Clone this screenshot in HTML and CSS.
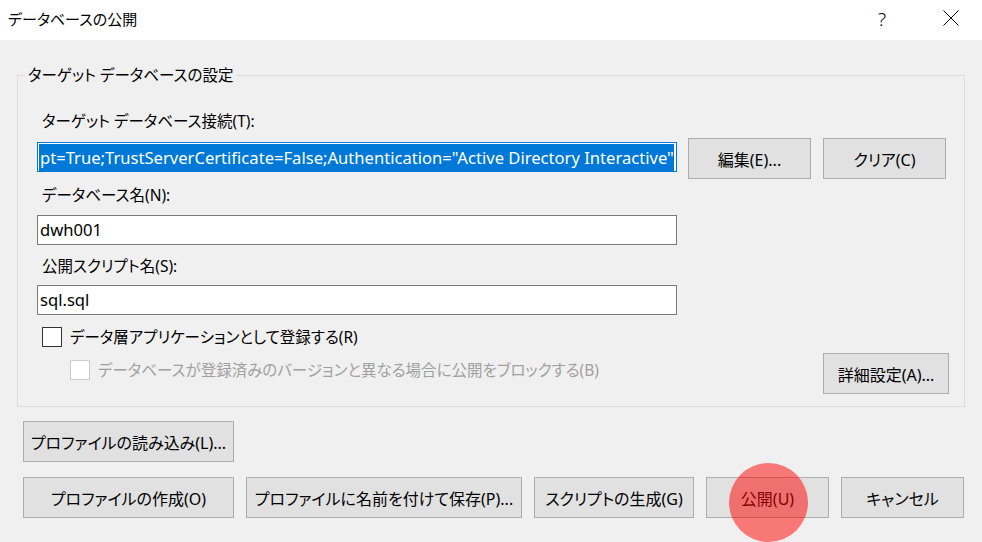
FILE: index.html
```html
<!DOCTYPE html>
<html lang="ja">
<head>
<meta charset="utf-8">
<title>データベースの公開</title>
<link rel="stylesheet" href="styles.css">
</head>
<body>
<div class="titlebar">
  <span class="title">データベースの公開</span>
  <span class="help">?</span>
  <span class="close">
    <svg width="16" height="16" viewBox="0 0 16 16"><path d="M0.5 0.5 L15.5 15.5 M15.5 0.5 L0.5 15.5" stroke="#000" stroke-width="1" fill="none"/></svg>
  </span>
</div>
<div class="dialog">
  <div class="group">
    <span class="legend">ターゲット データベースの設定</span>
    <div class="label l1">ターゲット データベース接続(T):</div>
    <div class="row conn">
      <div class="textbox active"><span class="sel">pt=True;TrustServerCertificate=False;Authentication="Active Directory Interactive"</span></div>
      <button class="btn w123 edit">編集(E)...</button>
      <button class="btn w123 clear">クリア(C)</button>
    </div>
    <div class="label l2">データベース名(N):</div>
    <div class="textbox tb2">dwh001</div>
    <div class="label l3">公開スクリプト名(S):</div>
    <div class="textbox tb3">sql.sql</div>
    <div class="check cb1"><span class="box"></span><span>データ層アプリケーションとして登録する(R)</span></div>
    <div class="row last">
      <div class="check cb2 disabled"><span class="box"></span><span>データベースが登録済みのバージョンと異なる場合に公開をブロックする(B)</span></div>
      <button class="btn adv">詳細設定(A)...</button>
    </div>
  </div>
  <div class="actions">
    <div class="arow">
      <button class="btn w211">プロファイルの読み込み(L)...</button>
    </div>
    <div class="arow second">
      <button class="btn w211">プロファイルの作成(O)</button>
      <button class="btn w276">プロファイルに名前を付けて保存(P)...</button>
      <button class="btn w160">スクリプトの生成(G)</button>
      <button class="btn w123">公開(U)</button>
      <button class="btn w123">キャンセル</button>
    </div>
  </div>
</div>
<span class="marker"></span>
</body>
</html>
```
FILE: styles.css
```css
html, body {
  margin: 0;
  padding: 0;
}
body {
  width: 982px;
  height: 542px;
  overflow: hidden;
  background: #f0f0f0;
  font-family: "Noto Sans", "Noto Sans CJK JP", sans-serif;
  font-size: 15.5px;
  font-feature-settings: "palt";
  color: #000;
  position: relative;
}
.titlebar {
  height: 40px;
  background: #fff;
  display: flex;
  align-items: center;
  padding-left: 8px;
  box-sizing: border-box;
}
.title {
  font-size: 15px;
  line-height: 20px;
  margin-top: -3px;
}
.help {
  margin-left: auto;
  font-size: 19px;
  font-weight: 300;
  line-height: 20px;
  margin-top: -3px;
}
.close {
  margin-left: 57px;
  margin-right: 23px;
  width: 16px;
  height: 16px;
  margin-top: -5px;
  display: block;
}
.close svg { display: block; }

.dialog {
  display: flex;
  flex-direction: column;
}
.group {
  position: relative;
  margin-top: 35px;
  margin-left: 17px;
  width: 948px;
  box-sizing: border-box;
  border: 1px solid #dcdcdc;
  padding: 35px 15px 12px 19px;
}
.legend {
  position: absolute;
  top: -11px;
  left: 7px;
  padding: 0 3px;
  line-height: 20px;
  background: #f0f0f0;
}
.label {
  line-height: 20px;
  padding-left: 5px;
}
.row {
  display: flex;
  align-items: flex-start;
}
.conn {
  margin-top: 7px;
}
.textbox {
  width: 640px;
  height: 30px;
  box-sizing: border-box;
  border: 1px solid #7a7a7a;
  background: #fff;
  font-size: 16.6px;
  line-height: 28px;
  padding-left: 2px;
  white-space: nowrap;
  overflow: hidden;
}
.textbox.active {
  border-color: #0078d7;
  margin-top: 4px;
  padding: 1px 0 0 1px;
  line-height: 27px;
}
.sel {
  display: inline-block;
  height: 27px;
  background: #0078d7;
  color: #fff;
  padding-left: 1px;
  vertical-align: top;
}
.btn {
  height: 41px;
  box-sizing: border-box;
  border: 1px solid #adadad;
  background: #e1e1e1;
  font-family: inherit;
  font-size: 16px;
  font-feature-settings: "palt";
  color: #000;
  padding: 0;
  white-space: nowrap;
  display: block;
}
.w123 { width: 123px; }
.w211 { width: 211px; }
.w276 { width: 276px; }
.w160 { width: 160px; }
.edit { margin-left: 11px; }
.clear { margin-left: 12px; }
.l2 { margin-top: 6px; }
.tb2 { margin-top: 10px; }
.l3 { margin-top: 11px; }
.tb3 { margin-top: 9px; }
.check {
  display: flex;
  align-items: center;
  line-height: 20px;
}
.box {
  width: 20px;
  height: 20px;
  box-sizing: border-box;
  border: 1px solid #333;
  background: #fff;
  margin-right: 8px;
}
.cb1 {
  margin-top: 12px;
  margin-left: 5px;
}
.last {
  margin-top: 6px;
}
.cb2 {
  margin-top: 7px;
  margin-left: 33px;
}
.disabled { color: #a0a0a0; }
.disabled .box { border-color: #cccccc; }
.adv {
  width: 126px;
  margin-left: auto;
}
.actions {
  margin-top: 14px;
  padding-left: 23px;
  display: flex;
  flex-direction: column;
  gap: 15px;
}
.arow {
  display: flex;
  gap: 12px;
}
.marker {
  position: absolute;
  left: 729px;
  top: 463px;
  width: 79px;
  height: 79px;
  border-radius: 50%;
  background: rgba(255, 0, 0, 0.5);
}
```
